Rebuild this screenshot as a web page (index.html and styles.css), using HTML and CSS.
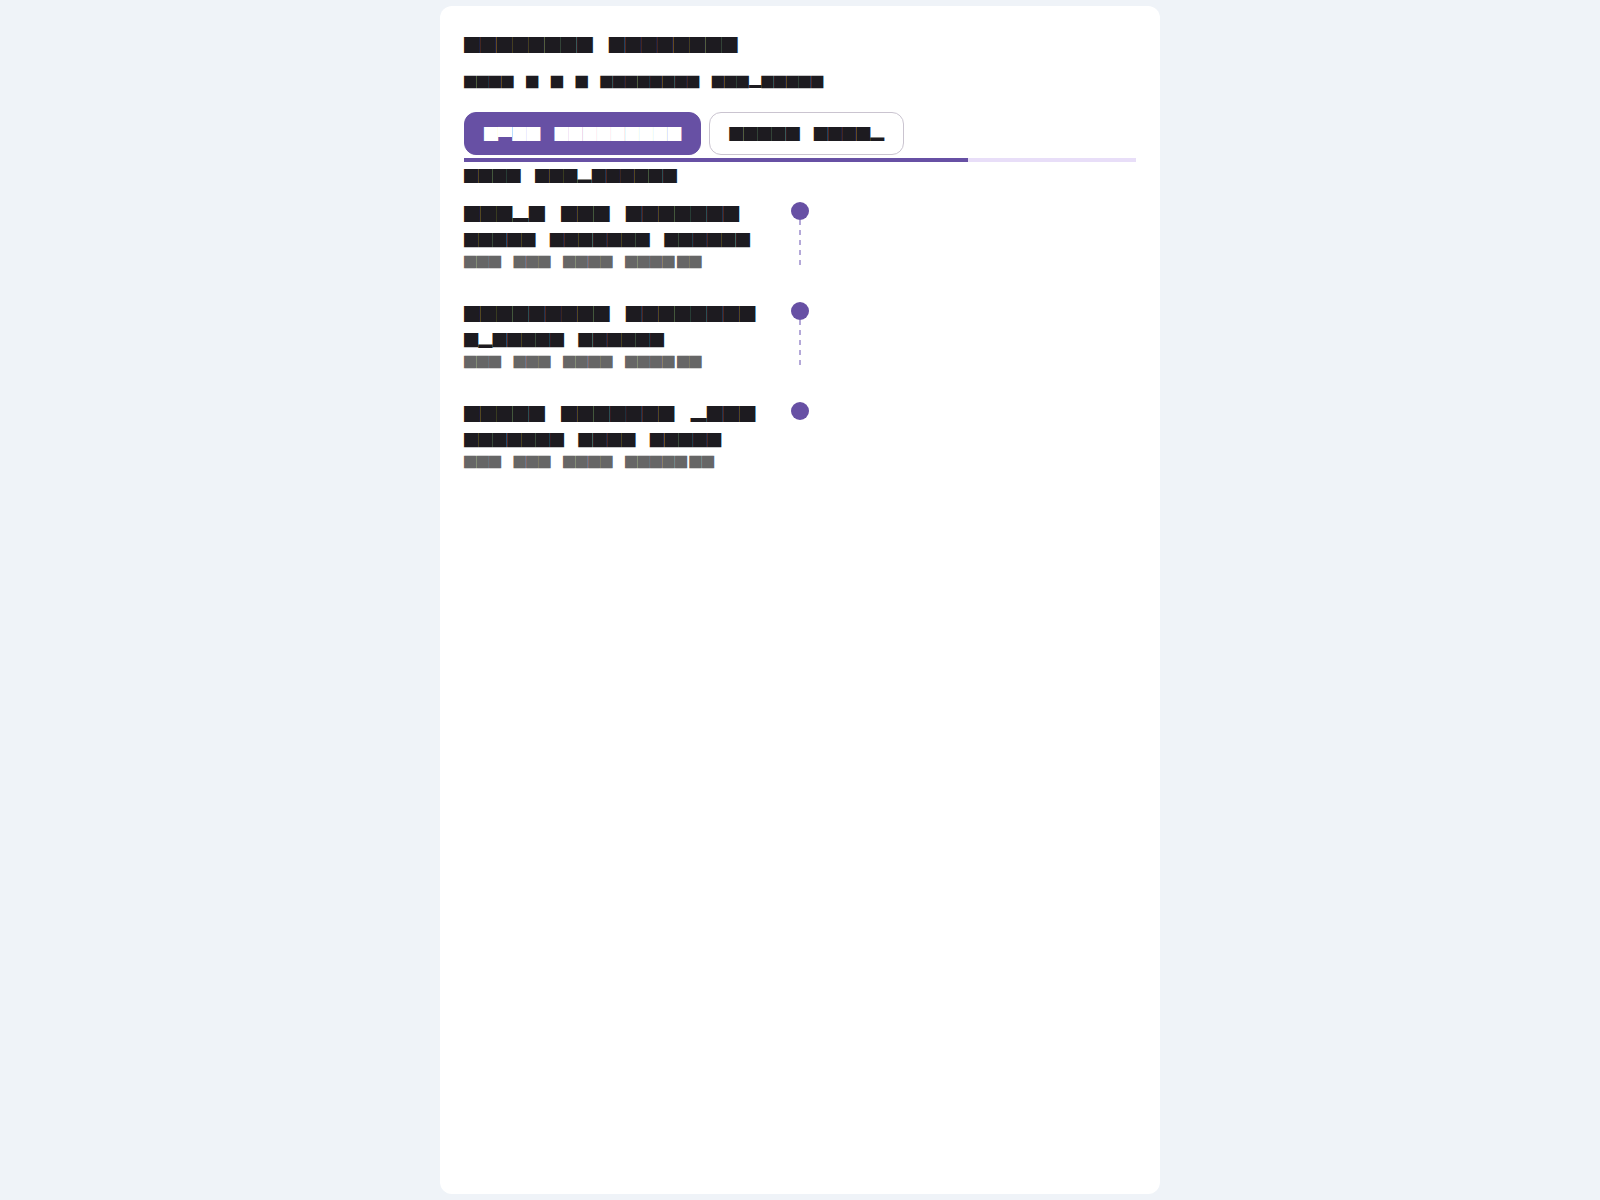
FILE: index.html
```html
<!DOCTYPE html>
<html lang="ja">
<head>
<meta charset="utf-8">
<title>Timeline</title>
<link rel="stylesheet" href="styles.css">
</head>
<body>
<main class="card">
  <h1 class="title">████████　████████</h1>
  <p class="subtitle">████　█　█　█　████████　███▂█████</p>
  <div class="actions">
    <button class="btn btn-filled">█<span class="up">█</span>██　█████████</button>
    <button class="btn btn-outline">█████　████▂</button>
  </div>
  <div class="progress"><div class="progress-fill" style="width:75%"></div></div>
  <p class="section">████　███▂██████</p>
  <ol class="timeline">
    <li class="item">
      <div class="content">
        <div class="item-title">███▂█　███　███████</div>
        <div class="item-desc">█████　███████　██████</div>
        <div class="item-meta">███　███　████　████<span class="thin">██</span></div>
      </div>
      <div class="rail"><span class="dot"></span><span class="line"></span></div>
      <div class="side"></div>
    </li>
    <li class="item">
      <div class="content">
        <div class="item-title">█████████　████████</div>
        <div class="item-desc">█▂█████　██████</div>
        <div class="item-meta">███　███　████　████<span class="thin">██</span></div>
      </div>
      <div class="rail"><span class="dot"></span><span class="line"></span></div>
      <div class="side"></div>
    </li>
    <li class="item">
      <div class="content">
        <div class="item-title">█████　███████　▂███</div>
        <div class="item-desc">███████　████　█████</div>
        <div class="item-meta">███　███　████　█████<span class="thin">██</span></div>
      </div>
      <div class="rail"><span class="dot"></span></div>
      <div class="side"></div>
    </li>
  </ol>
</main>
</body>
</html>
```

FILE: styles.css
```css
* { box-sizing: border-box; }

html, body {
  margin: 0;
  padding: 0;
}

body {
  background: #eff3f8;
  padding: 6px 0;
  font-family: "Noto Sans CJK JP", "DejaVu Sans", sans-serif;
  color: #1d1b20;
}

.card {
  width: 720px;
  min-height: 1188px;
  margin: 0 auto;
  background: #ffffff;
  border-radius: 12px;
  padding: 26px 24px 24px;
}

.title {
  margin: 0;
  font-size: 16.1px;
  line-height: 24px;
  font-weight: 700;
  white-space: nowrap;
}

.subtitle {
  margin: 16px 0 0;
  font-size: 12.4px;
  line-height: 20px;
  white-space: nowrap;
}

.actions {
  display: flex;
  gap: 8px;
  margin-top: 20px;
}

.btn {
  font-family: inherit;
  font-size: 14.1px;
  line-height: 41px;
  height: 43px;
  padding: 0 19px;
  border-radius: 12px;
  border: 1px solid #6750a4;
  white-space: nowrap;
  cursor: pointer;
}

.btn-filled {
  background: #6750a4;
  color: #ffffff;
}

.btn-outline {
  background: #ffffff;
  border-color: #cac4d0;
  color: #1d1b20;
}

.up {
  background: linear-gradient(to bottom, #ffffff 0 13.6px, transparent 13.6px);
  -webkit-background-clip: text;
  background-clip: text;
  color: transparent;
}

.progress {
  margin-top: 3px;
  height: 4px;
  background: #e8def8;
}

.progress-fill {
  height: 100%;
  background: #6750a4;
}

.section {
  margin: 3px 0 0;
  font-size: 14.2px;
  line-height: 20px;
  white-space: nowrap;
}

.timeline {
  list-style: none;
  margin: 16px 0 0;
  padding: 0;
  display: flex;
  flex-direction: column;
  gap: 31px;
}

.item {
  display: grid;
  grid-template-columns: 1fr 18px 1fr;
  column-gap: 16px;
}

.content {
  white-space: nowrap;
}

.item-title {
  font-size: 16.2px;
  line-height: 24px;
}

.item-desc {
  margin-top: 5px;
  font-size: 14.3px;
  line-height: 20px;
}

.item-meta {
  margin-top: 4px;
  font-size: 12.4px;
  line-height: 16px;
  color: #666666;
}

.thin {
  margin-left: 2.3px;
}

.rail {
  display: flex;
  flex-direction: column;
  align-items: center;
  padding-top: 1px;
}

.dot {
  width: 18px;
  height: 18px;
  border-radius: 50%;
  background: #6750a4;
  flex: none;
}

.line {
  flex: 1;
  width: 2px;
  margin-bottom: 4px;
  background: repeating-linear-gradient(to bottom, #b4a8d8 0 5px, transparent 5px 10px);
}
```
